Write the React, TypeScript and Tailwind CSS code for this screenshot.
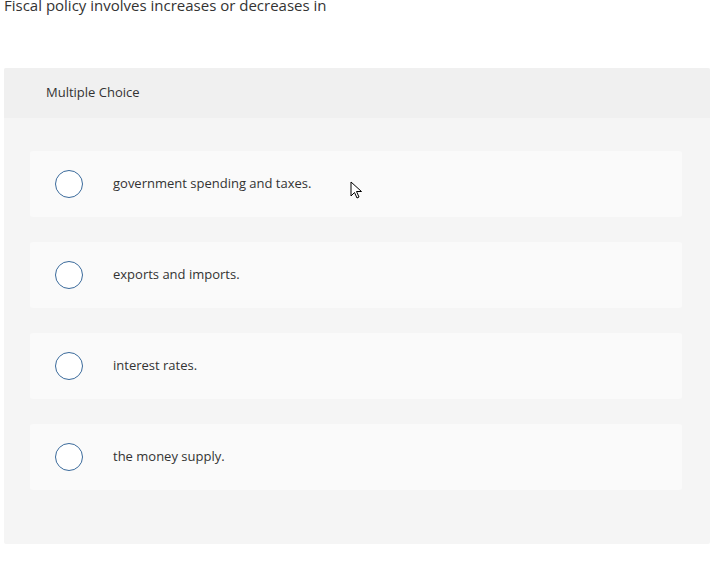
import React from 'react';

const choices = [
  'government spending and taxes.',
  'exports and imports.',
  'interest rates.',
  'the money supply.',
];

const Cursor = () => (
  <svg width="13" height="20" viewBox="0 0 13 20" className="absolute left-[350px] top-[181px]">
    <path d="M1 1 L1 15 L4.5 11.5 L7 17 L9 16 L6.5 10.5 L11.5 10.5 Z" fill="#fff" stroke="#000" strokeWidth="1" strokeLinejoin="miter" />
  </svg>
);

export default function App() {
  return (
    <div className="relative w-[722px] h-[579px] bg-white overflow-hidden font-['Open_Sans',sans-serif]">
      <p className="-mt-[6px] pl-[4px] text-[15px] leading-[22px] text-[#333]">
        Fiscal policy involves increases or decreases in
      </p>

      <div className="mt-[52px] ml-[4px] w-[706px] h-[476px] rounded-[2px] bg-[#f5f5f5] overflow-hidden">
        <div className="h-[50px] bg-[#f0f0f0] pl-[42px] flex items-center text-[13px] text-[#333]">
          Multiple Choice
        </div>
        <div className="pl-[26px] pr-[28px] pt-[33px] flex flex-col gap-[25px]">
          {choices.map((c) => (
            <div key={c} className="h-[66px] rounded-[3px] bg-[#fafafa] flex items-center">
              <span className="ml-[25px] w-[28px] h-[28px] rounded-full border-[1.5px] border-[#3a6a9b] bg-white shrink-0" />
              <span className="ml-[30px] text-[13px] text-[#333]">{c}</span>
            </div>
          ))}
        </div>
      </div>

      <Cursor />
    </div>
  );
}
